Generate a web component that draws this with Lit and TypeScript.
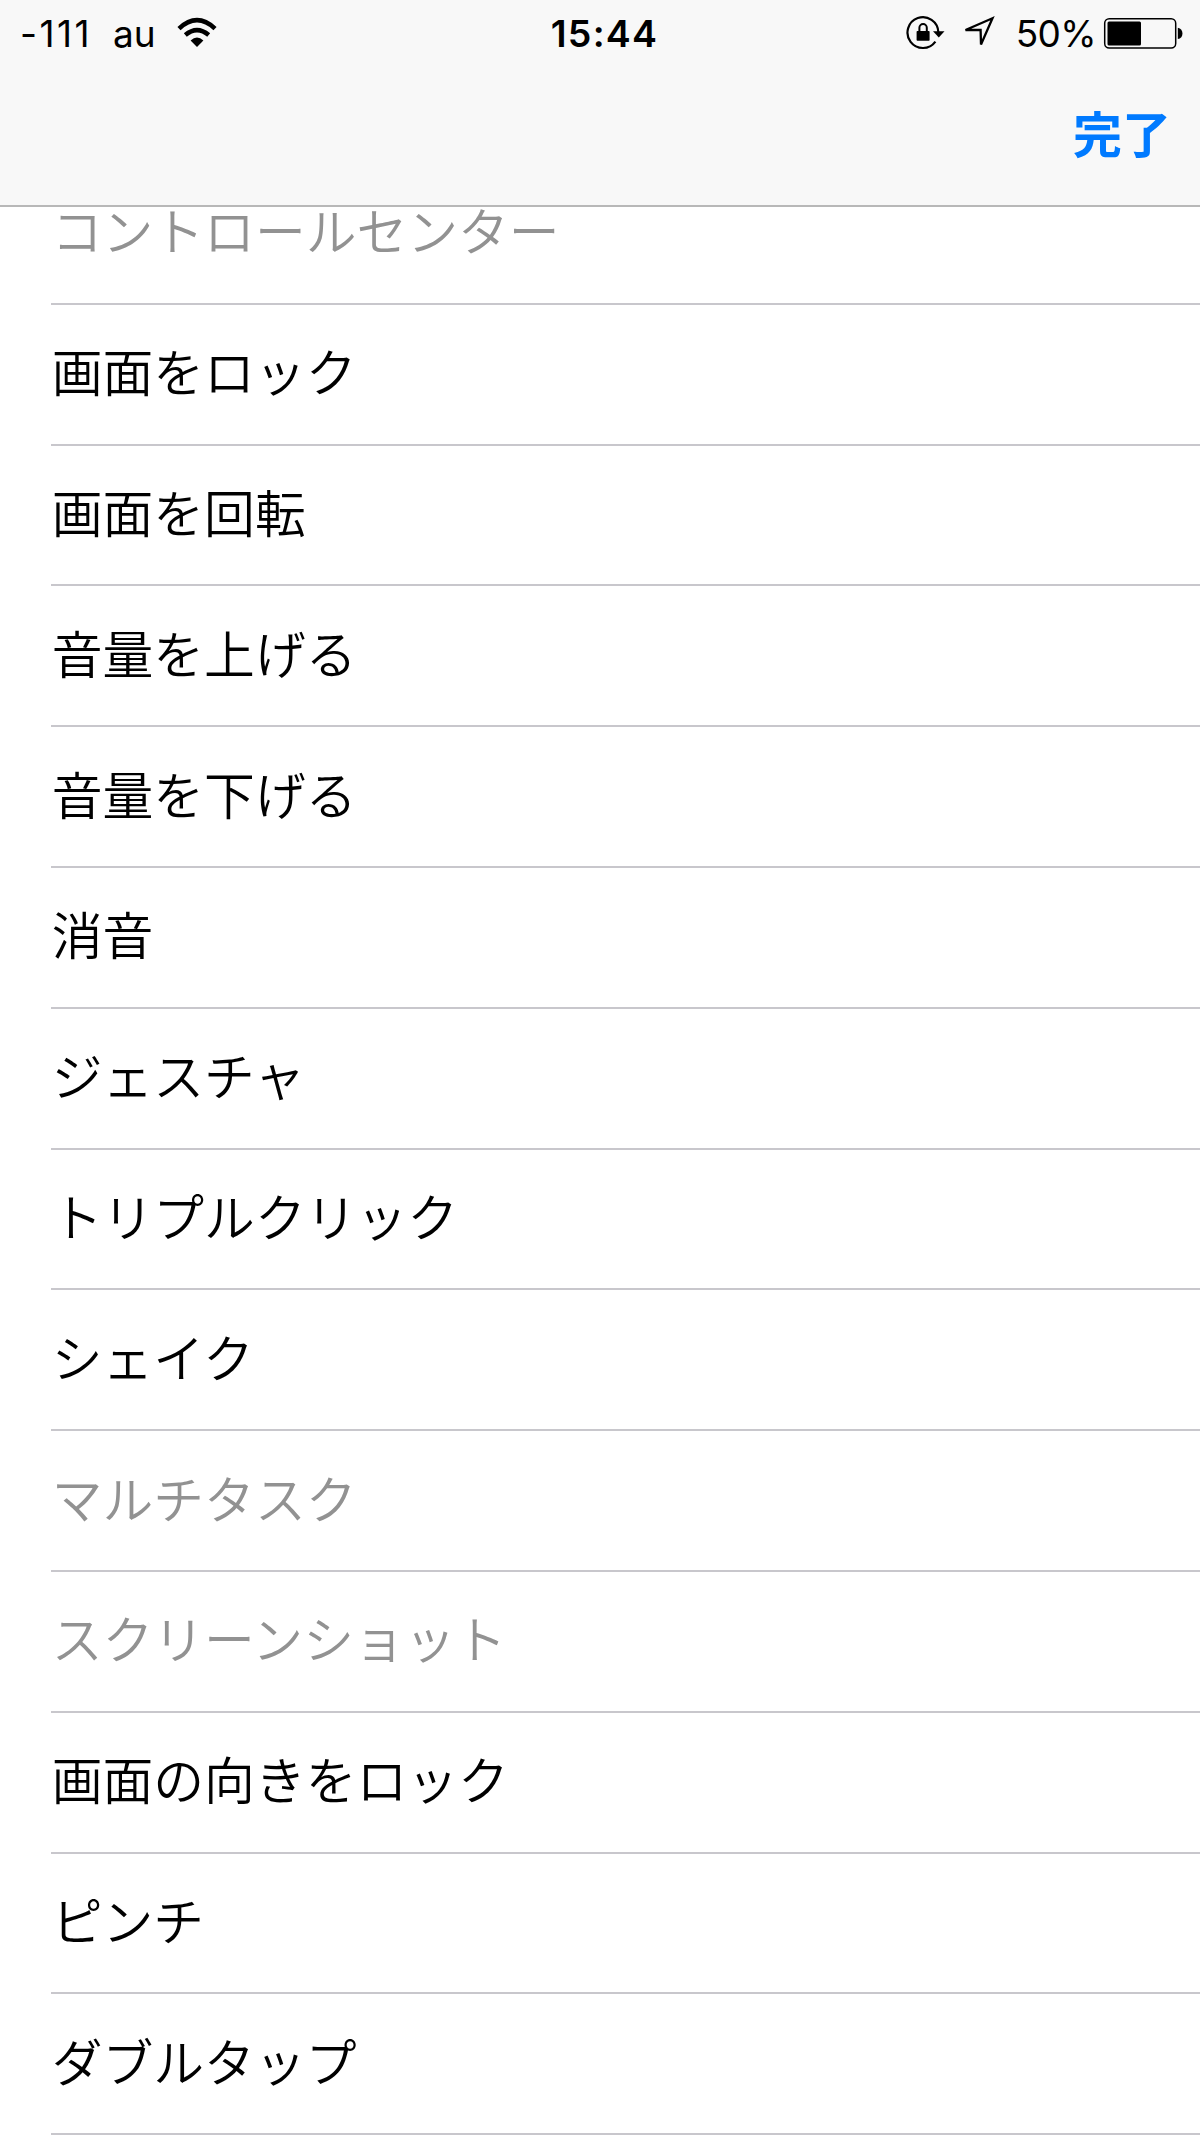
import { LitElement, html, css } from "lit";
import { customElement } from "lit/decorators.js";

const rows: [string, boolean][] = [
  ["コントロールセンター", true], ["画面をロック", false], ["画面を回転", false], ["音量を上げる", false],
  ["音量を下げる", false], ["消音", false], ["ジェスチャ", false], ["トリプルクリック", false], ["シェイク", false],
  ["マルチタスク", true], ["スクリーンショット", true], ["画面の向きをロック", false], ["ピンチ", false], ["ダブルタップ", false],
];

@customElement("app-root")
export class AppRoot extends LitElement {
  static styles = css`
    :host { display: flex; flex-direction: column; width: 1200px; height: 2135px; overflow: hidden; background: #fff; font-family: Inter, "Noto Sans CJK JP", sans-serif; color: #000; }
    .header { box-sizing: border-box; flex: none; height: 207px; background: #f8f8f8; border-bottom: 2px solid #b8b8b8; }
    .status { display: grid; grid-template-columns: 1fr auto 1fr; height: 66px; align-items: center; font-size: 37px; padding: 0 17px 0 20px; }
    .left, .right { display: flex; align-items: center; }
    .left { gap: 23px; }
    .signal { font-size: 37px; letter-spacing: 2.5px; margin-right: -2.3px; }
    .right { justify-content: flex-end; }
    .pct { font-size: 37px; letter-spacing: -0.6px; margin: 0 7px 0 19px; }
    .time { font-weight: 600; font-size: 37.5px; letter-spacing: 1.2px; padding-left: 6px; }
    .loc { margin-left: 15px; }
    svg { display: block; flex: none; }
    .wifi { margin-left: -3px; }
    .nav { display: flex; justify-content: flex-end; padding: 33px 29px 0 0; font-size: 49px; line-height: 74px; font-weight: 700; color: #007aff; }
    .clip { flex: 1; min-height: 0; overflow: hidden; }
    .list { margin: -43px 0 0 51px; }
    .row { box-sizing: border-box; height: 140.8px; border-bottom: 2px solid #c8c7cc; padding-left: 0.7px; display: flex; align-items: center; font-size: 50.8px; line-height: 50px; font-weight: 350; }
    .off { color: #929292; }
  `;
  render() {
    return html`
      <div class="header">
        <div class="status">
          <div class="left">
            <span class="signal">-111</span><span>au</span>
            <svg class="wifi" width="42" height="66" viewBox="175 0 42 66">
              <path d="M178 28.6Q196 11.8 214 28.6M184.3 35Q196 25.2 207.7 35" fill="none" stroke="#000" stroke-width="4.6"/>
              <path d="M189.6 40.6Q196 34.4 202.4 40.6L196 47Z"/>
            </svg>
          </div>
          <div class="time">15:44</div>
          <div class="right">
            <svg width="40" height="66" viewBox="906 0 40 66">
              <path d="M938.3 32A15.4 15.4 0 1 0 935.4 41.6" fill="none" stroke="#000" stroke-width="2.2"/>
              <path d="M933 31.3H944.5L938.8 37.6Z"/>
              <path d="M919.4 32V27.8A3.7 3.7 0 0 1 926.8 27.8V32" fill="none" stroke="#000" stroke-width="2"/>
              <rect x="916.6" y="31" width="13" height="9.7" rx="0.8"/>
            </svg>
            <svg class="loc" width="36" height="66" viewBox="962 0 36 66">
              <path d="M993.5 18.2L966.5 30H981.6L982 44.5Z" fill="none" stroke="#000" stroke-width="2.3"/>
            </svg>
            <span class="pct">50%</span>
            <svg width="80" height="66" viewBox="1103 0 80 66">
              <rect x="1104.7" y="18.7" width="71" height="29.4" rx="4.5" fill="none" stroke="#000" stroke-width="1.5"/>
              <rect x="1107.5" y="21.5" width="33.5" height="24" rx="1.5"/>
              <path d="M1177.8 27.8C1184 28.6 1184 38.2 1177.8 39Z"/>
            </svg>
          </div>
        </div>
        <div class="nav">完了</div>
      </div>
      <div class="clip"><div class="list">${rows.map(([t, off]) => html`<div class="row ${off ? "off" : ""}"><span>${t}</span></div>`)}</div></div>`;
  }
}
